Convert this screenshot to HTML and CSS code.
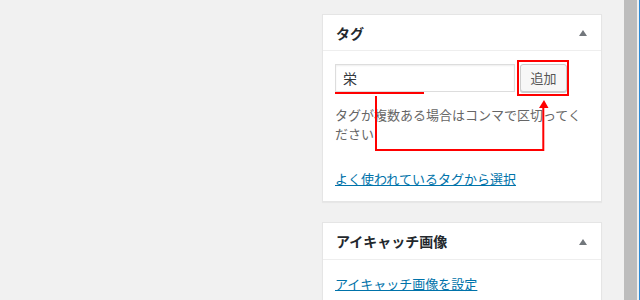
FILE: index.html
```html
<!DOCTYPE html>
<html lang="ja">

<head>
  <meta charset="UTF-8" />
  <meta name="viewport" content="width=device-width, initial-scale=1.0" />
  <title>タグ</title>
  <link rel="stylesheet" href="styles.css">
</head>

<body>
  <div class="main"></div>

  <div class="sidebar">
    <div class="postbox">
      <div class="postbox-head">
        <h2>タグ</h2>
        <span class="toggle"></span>
      </div>
      <div class="inside">
        <div class="tag-row">
          <input class="tag-input" type="text" value="栄" />
          <button class="button" type="button">追加</button>
        </div>
        <p class="howto">タグが複数ある場合はコンマで区切ってください</p>
        <a class="link" href="#">よく使われているタグから選択</a>
      </div>

      <!-- red notes drawn over the box -->
      <svg class="notes" viewBox="323 15 280 190" width="280" height="190">
        <rect x="518" y="61" width="50" height="34" fill="none" stroke="#f00" stroke-width="2" />
        <line x1="335" y1="93" x2="424" y2="93" stroke="#f00" stroke-width="2" />
        <polyline points="376,96 376,150 543.3,150 543.3,106" fill="none" stroke="#f00" stroke-width="2" />
        <polygon points="539,108 548.5,108 544,100" fill="#f00" />
      </svg>
    </div>

    <div class="postbox postbox-second">
      <div class="postbox-head">
        <h2>アイキャッチ画像</h2>
        <span class="toggle"></span>
      </div>
      <div class="inside">
        <a class="link" href="#">アイキャッチ画像を設定</a>
      </div>
    </div>
  </div>

  <div class="scrollbar"></div>
  <div class="edge"></div>
</body>

</html>
```

FILE: styles.css
```css
body {
  background: #f1f1f1;
  display: flex;
  font-family: "Noto Sans CJK JP", "Liberation Sans", sans-serif;
  height: 300px;
  margin: 0;
  overflow: hidden;
}

.main {
  flex: 1;
}

.sidebar {
  flex: 0 0 280px;
  margin: 14px 22px 0 0;
}

.scrollbar {
  background: #bdbdbd;
  flex: 0 0 13px;
}

.edge {
  background: #f1f1f1;
  border-right: 1px solid #2e8bd6;
  flex: 0 0 2px;
}

.postbox {
  background: #fff;
  border: 1px solid #e5e5e5;
  box-shadow: 0 1px 1px rgba(0, 0, 0, .04);
  box-sizing: border-box;
  margin-bottom: 20px;
  position: relative;
}

.postbox-head {
  align-items: center;
  border-bottom: 1px solid #eee;
  display: flex;
  height: 35px;
  justify-content: space-between;
  padding: 0 14px 0 13px;
}

.postbox-second .postbox-head {
  height: 36px;
}

.postbox-head h2 {
  color: #23282d;
  font-size: 14px;
  font-weight: 700;
  line-height: 20px;
  margin: 0;
}

.toggle {
  border-bottom: 6px solid #72777c;
  border-left: 4px solid transparent;
  border-right: 4px solid transparent;
  height: 0;
  margin-top: 1px;
  width: 0;
}

.inside {
  padding: 13px 12px 13px;
}

.postbox-second .inside {
  padding-top: 14px;
}

.tag-row {
  display: flex;
  gap: 5px;
}

.tag-input {
  background: #fff;
  border: 1px solid #ddd;
  box-shadow: inset 0 1px 2px rgba(0, 0, 0, .07);
  box-sizing: border-box;
  color: #32373c;
  font-family: inherit;
  font-size: 14px;
  height: 28px;
  margin: 0;
  padding: 0 7px;
  width: 180px;
}

.button {
  background: #f7f7f7;
  border: 1px solid #ccc;
  border-radius: 3px;
  box-shadow: 0 1px 0 #ccc;
  box-sizing: border-box;
  color: #555;
  font-family: inherit;
  font-size: 13px;
  height: 28px;
  line-height: 26px;
  margin: 0;
  padding: 0 9px;
  width: 47px;
}

.howto {
  color: #666;
  font-size: 13px;
  line-height: 19px;
  margin: 13px 0 26px;
}

.link {
  color: #0073aa;
  display: block;
  font-size: 13px;
  line-height: 19px;
  text-decoration: underline;
}

.notes {
  left: 0;
  pointer-events: none;
  position: absolute;
  top: 0;
}
```
